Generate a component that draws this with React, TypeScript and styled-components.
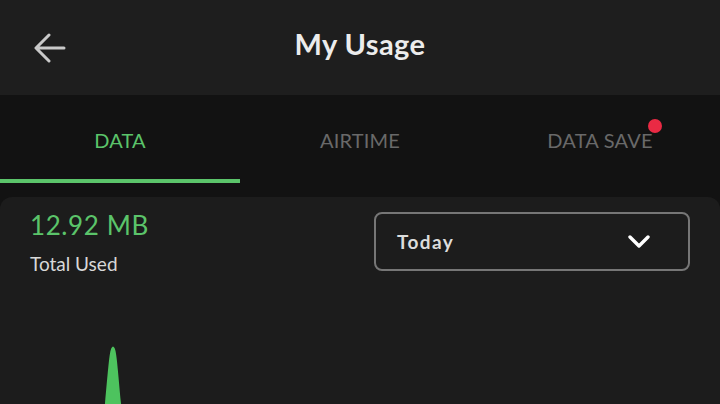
import React, { FC, useState } from 'react';
import styled, { createGlobalStyle } from 'styled-components';

const Green = '#5bc46a';
const Font = `Lato, 'Liberation Sans', sans-serif`;

const GlobalStyle = createGlobalStyle`
  html, body {
    margin: 0;
    padding: 0;
    background: #121212;
    overflow: hidden;
  }
  * {
    box-sizing: border-box;
  }
`;

const Screen = styled.div`
  width: 720px;
  height: 404px;
  display: flex;
  flex-direction: column;
  background: #121212;
  font-family: ${Font};
  overflow: hidden;
`;

const Header = styled.header`
  height: 95px;
  flex-shrink: 0;
  display: grid;
  grid-template-columns: 100px 1fr 100px;
  align-items: center;
  background: #1e1e1e;
`;

const BackButton = styled.button`
  background: none;
  border: none;
  padding: 0 0 0 34px;
  height: 40px;
  display: flex;
  align-items: center;
  color: #c9c9c9;
  cursor: pointer;
`;

const Title = styled.h1`
  margin: 0;
  text-align: center;
  font-size: 29px;
  font-weight: 700;
  color: #ececec;
  letter-spacing: 0.4px;
  padding-bottom: 8px;
`;

const TabBar = styled.nav`
  height: 102px;
  flex-shrink: 0;
  display: grid;
  grid-template-columns: repeat(3, 1fr);
  background: #121212;
`;

const Tab = styled.button<{ $active?: boolean }>`
  background: none;
  border: none;
  padding: 6px 0 0;
  display: flex;
  align-items: center;
  justify-content: center;
  font-family: ${Font};
  font-size: 20px;
  font-weight: 400;
  letter-spacing: 0.2px;
  color: ${p => (p.$active ? Green : '#696969')};
  border-bottom: 4px solid ${p => (p.$active ? Green : 'transparent')};
  margin-bottom: 14px;
  cursor: pointer;
`;

const TabLabel = styled.span`
  position: relative;
`;

const Badge = styled.span`
  position: absolute;
  top: -9px;
  right: -9px;
  width: 14px;
  height: 14px;
  border-radius: 50%;
  background: #ea2a44;
`;

const Card = styled.section`
  flex: 1;
  display: flex;
  flex-direction: column;
  background: #1c1c1c;
  border-radius: 12px 12px 0 0;
`;

const SummaryRow = styled.div`
  height: 77px;
  flex-shrink: 0;
  display: flex;
  justify-content: space-between;
  align-items: flex-start;
  padding: 15px 30px 0 30px;
`;

const Totals = styled.div`
  display: flex;
  flex-direction: column;
  gap: 14px;
`;

const Amount = styled.span`
  font-size: 26px;
  font-weight: 400;
  color: ${Green};
  letter-spacing: 0.6px;
  line-height: 26px;
`;

const AmountLabel = styled.span`
  font-size: 19px;
  color: #d8d8d8;
  line-height: 24px;
`;

const Select = styled.button`
  width: 316px;
  height: 59px;
  display: flex;
  align-items: center;
  justify-content: space-between;
  padding: 0 38px 0 21px;
  background: #1c1c1c;
  border: 2px solid #767676;
  border-radius: 8px;
  font-family: ${Font};
  font-size: 19px;
  font-weight: 700;
  color: #dcdcdc;
  letter-spacing: 1.4px;
  cursor: pointer;
`;

const Chart = styled.svg`
  display: block;
  width: 720px;
  height: 130px;
  flex-shrink: 0;
`;

const ArrowLeft: FC = () => (
  <svg width="32" height="30" viewBox="0 0 32 30" fill="none">
    <path
      d="M30 15H3M15 2L2 15l13 13"
      stroke="currentColor"
      strokeWidth="3"
      strokeLinecap="round"
      strokeLinejoin="round"
    />
  </svg>
);

const Chevron: FC = () => (
  <svg width="22" height="14" viewBox="0 0 22 14" fill="none">
    <path
      d="M2 2l9 9 9-9"
      stroke="#ffffff"
      strokeWidth="3.4"
      strokeLinecap="round"
      strokeLinejoin="round"
    />
  </svg>
);

const tabs = ['DATA', 'AIRTIME', 'DATA SAVE'];

const App: FC = () => {
  const [active, setActive] = useState(0);

  return (
    <Screen>
      <GlobalStyle />
      <Header>
        <BackButton aria-label="Back">
          <ArrowLeft />
        </BackButton>
        <Title>My Usage</Title>
        <span />
      </Header>
      <TabBar>
        {tabs.map((tab, index) => (
          <Tab key={tab} $active={index === active} onClick={() => setActive(index)}>
            <TabLabel>
              {tab}
              {tab === 'DATA SAVE' && <Badge />}
            </TabLabel>
          </Tab>
        ))}
      </TabBar>
      <Card>
        <SummaryRow>
          <Totals>
            <Amount>12.92 MB</Amount>
            <AmountLabel>Total Used</AmountLabel>
          </Totals>
          <Select>
            Today
            <Chevron />
          </Select>
        </SummaryRow>
        <Chart viewBox="0 0 720 130">
          <path
            d="M103 150 C108 100 109 78 111.5 74 Q113 71 114.5 74 C117 78 118 100 123 150 Z"
            fill="#4dc35e"
          />
        </Chart>
      </Card>
    </Screen>
  );
};

export default App;
